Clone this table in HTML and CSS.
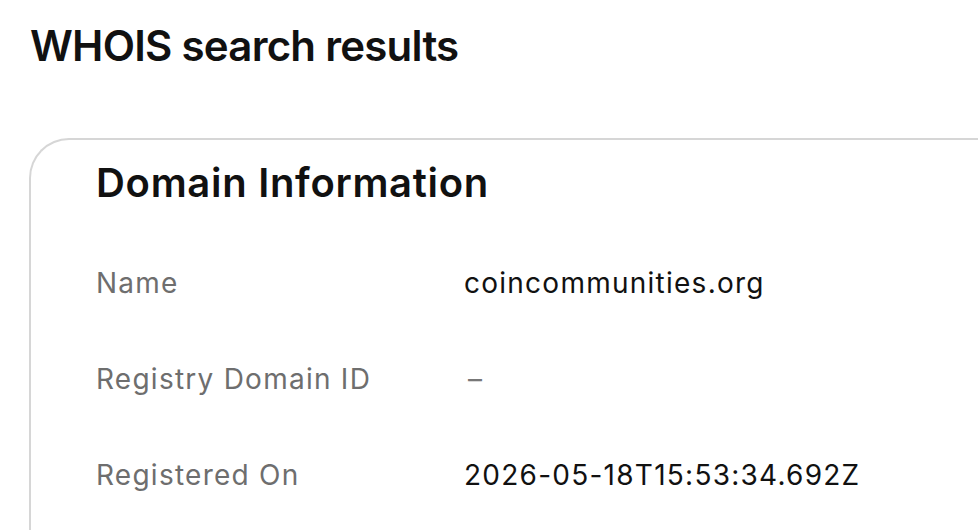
FILE: index.html
```html
<!DOCTYPE html>
<html lang="en">
<head>
    <meta charset="UTF-8">
    <meta name="viewport" content="width=device-width, initial-scale=1.0">
    <title>WHOIS search results</title>
    <link rel="stylesheet" href="styles.css">
</head>
<body>
    <h1 class="page-title">WHOIS search results</h1>

    <section class="card">
        <h2 class="card-title">Domain Information</h2>

        <div class="info-row">
            <span class="info-label">Name</span>
            <span class="info-value">coincommunities.org</span>
        </div>
        <div class="info-row">
            <span class="info-label">Registry Domain ID</span>
            <span class="info-value empty">–</span>
        </div>
        <div class="info-row">
            <span class="info-label">Registered On</span>
            <span class="info-value">2026-05-18T15:53:34.692Z</span>
        </div>
    </section>
</body>
</html>
```

FILE: styles.css
```css
body {
    margin: 0;
    padding: 0;
    font-family: Inter, 'Noto Sans', Arial, sans-serif;
    background-color: #fff;
    color: #111;
    overflow: hidden;
}

.page-title {
    margin: 0;
    padding: 20px 0 0 30px;
    font-size: 42px;
    font-weight: 600;
    line-height: 52px;
    letter-spacing: -0.75px;
}

.card {
    margin: 66px 0 0 29px;
    padding: 17px 0 0 65px;
    border: 2px solid #d6d6d6;
    border-right: none;
    border-bottom: none;
    border-top-left-radius: 40px;
    height: 600px;
}

.card-title {
    margin: 0 0 54px 0;
    font-size: 40px;
    font-weight: 600;
    line-height: 52px;
    letter-spacing: 0.7px;
}

.info-row {
    display: flex;
    height: 96px;
    font-size: 28px;
    line-height: 40px;
    letter-spacing: 1.25px;
}

.info-label {
    width: 368px;
    color: #6e6e6e;
}

.info-value {
    color: #111;
}

.info-value.empty {
    padding-left: 4px;
    color: #777;
}
```
